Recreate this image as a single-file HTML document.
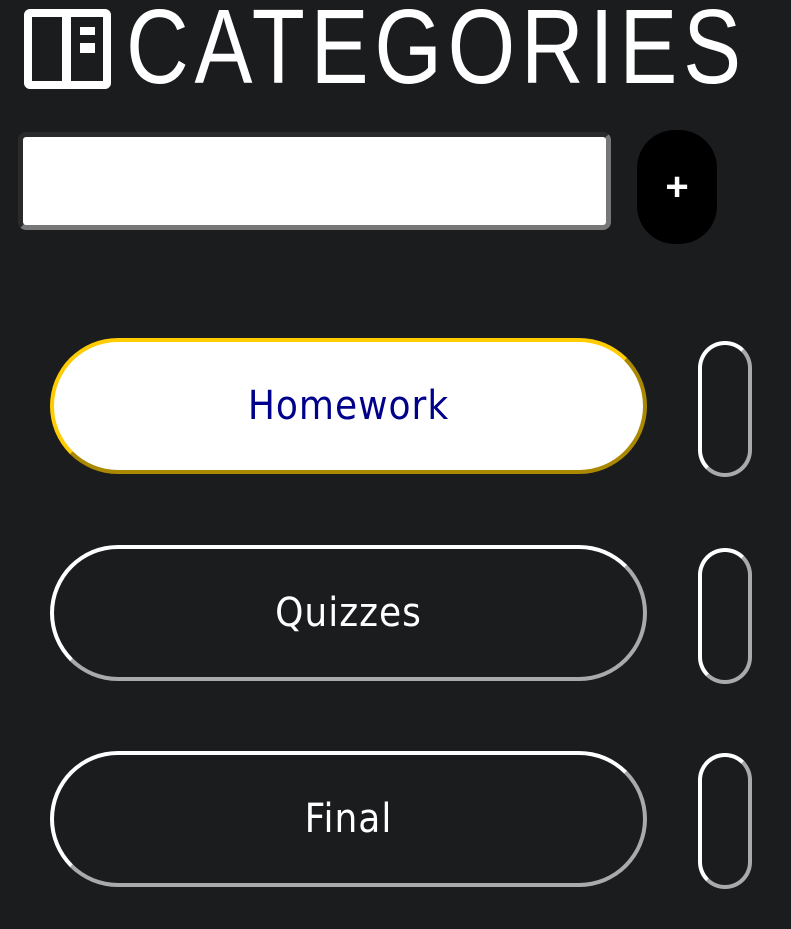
<!DOCTYPE html>
<html><head><style>
html,body{margin:0;padding:0;width:791px;height:929px;background:#1b1c1e;overflow:hidden;font-family:"DejaVu Sans Condensed","Liberation Sans",sans-serif;}
.abs{position:absolute;box-sizing:border-box;}
.title{position:absolute;left:126px;top:-6px;font-size:106px;color:#fff;font-family:"Liberation Sans",sans-serif;font-weight:normal;transform-origin:0 0;transform:scaleX(0.82);letter-spacing:7px;line-height:1;white-space:nowrap;}
.pill{position:absolute;box-sizing:border-box;left:50px;width:597px;height:136px;border-radius:68px;border:4px solid;border-color:#fff #aaa #aaa #fff;display:flex;align-items:center;justify-content:center;color:#fff;font-size:40px;letter-spacing:1px;}
.sm{position:absolute;box-sizing:border-box;left:698px;width:54px;height:136px;border-radius:27px;border:4px solid;border-color:#fff #aaa #aaa #fff;}
</style></head><body>
<div class="abs" style="left:24px;top:9px;width:87px;height:80px;border:8px solid #fff;border-radius:6px;"></div>
<div class="abs" style="left:62px;top:17px;width:9px;height:64px;background:#fff;"></div>
<div class="abs" style="left:80px;top:27px;width:15px;height:8px;background:#fff;"></div>
<div class="abs" style="left:80px;top:43px;width:15px;height:10px;background:#fff;"></div>
<div class="title">CATEGORIES</div>
<div class="abs" style="left:18px;top:132px;width:593px;height:98px;border-radius:8px;border:5px solid;border-color:#2a2a2a #777 #777 #2a2a2a;background:#fff;"></div>
<div class="abs" style="left:637px;top:130px;width:80px;height:114px;border-radius:38px;background:#000;color:#fff;font-size:40px;font-weight:bold;display:flex;align-items:center;justify-content:center;font-family:'Liberation Sans',sans-serif;">+</div>
<div class="pill" style="top:338px;background:#fff;border-color:#ffcc00 #aa8800 #aa8800 #ffcc00;color:#00008b;">Homework</div>
<div class="sm" style="top:341px;"></div>
<div class="pill" style="top:545px;">Quizzes</div>
<div class="sm" style="top:548px;"></div>
<div class="pill" style="top:751px;">Final</div>
<div class="sm" style="top:753px;"></div>
</body></html>
